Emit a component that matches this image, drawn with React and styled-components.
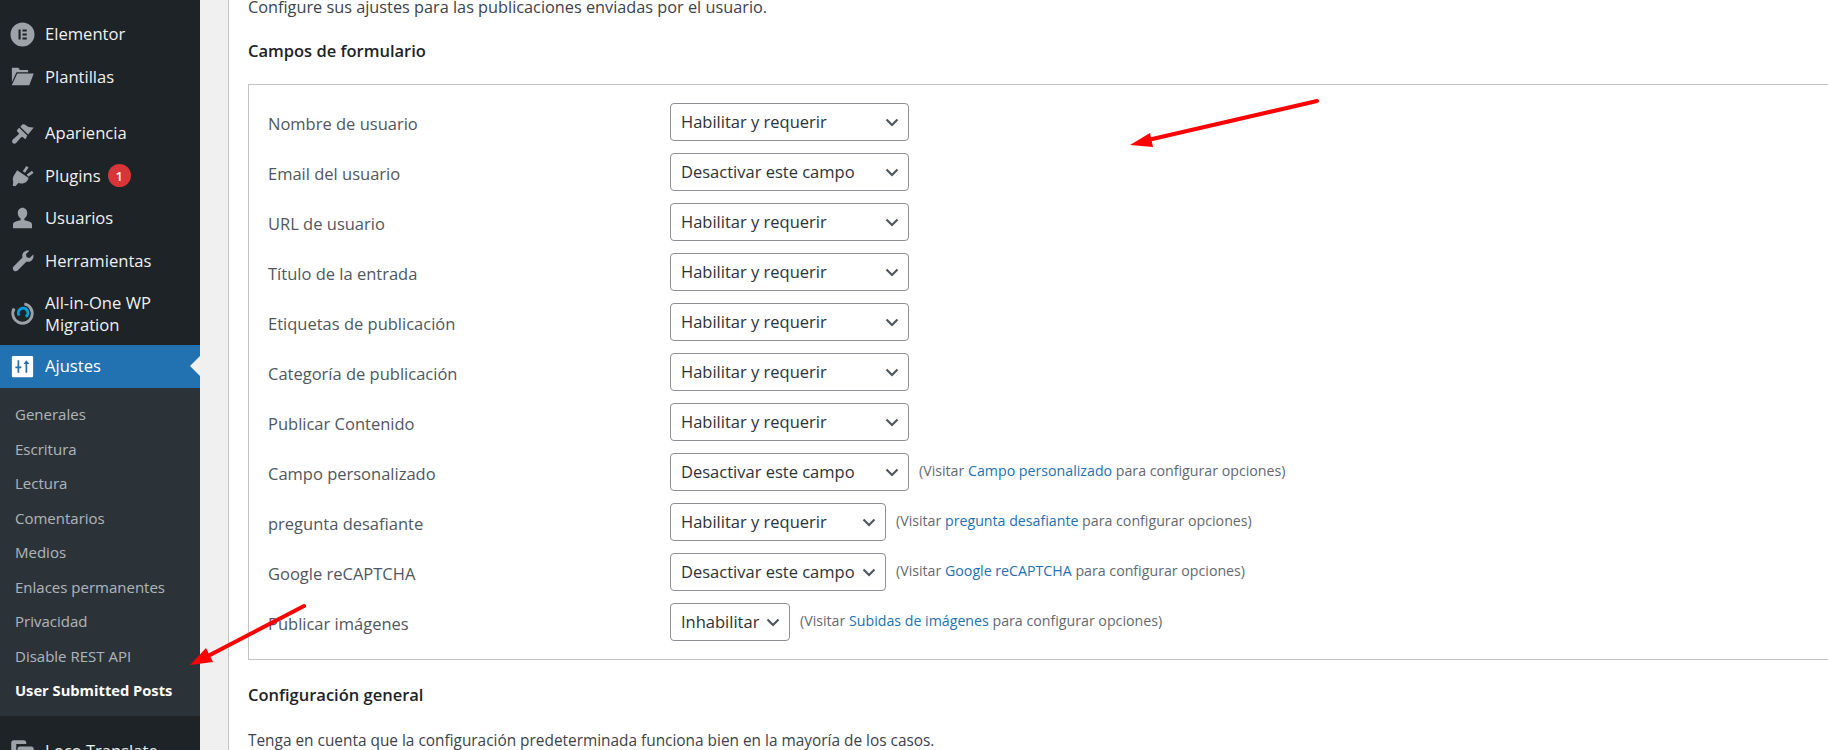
import React from 'react'
import styled, { createGlobalStyle, css } from 'styled-components'

const GlobalStyle = createGlobalStyle`
  html, body {
    margin: 0;
    height: 100%;
    overflow: hidden;
    background: #f0f0f1;
    font-family: 'Open Sans', 'Noto Sans', sans-serif;
  }
`

const chevron = `url("data:image/svg+xml;utf8,<svg xmlns='http://www.w3.org/2000/svg' width='16' height='16' viewBox='0 0 16 16'><path d='M2.500 5.500l5.500 5.500 5.500-5.500' fill='none' stroke='%2350575e' stroke-width='2.200'/></svg>")`

const Page = styled.div`
  display: flex;
  height: 750px;
  overflow: hidden;
  position: relative;
`
const Sidebar = styled.nav`
  width: 200px;
  flex: none;
  background: #1d2327;
  padding-top: 13px;
`
const MenuItem = styled.div`
  position: relative;
  display: flex;
  align-items: center;
  gap: 10px;
  height: ${p => (p.$tall ? 63 : 42.5)}px;
  padding-left: 10px;
  color: #f0f0f1;
  font-size: 16.6px;
  line-height: 22px;
  box-sizing: border-box;
  ${p => p.$active && css`
    background: #2271b1;
    color: #fff;
    &::after {
      content: '';
      position: absolute;
      right: 0;
      top: 11px;
      border: 10px solid transparent;
      border-left: 0;
      border-right-color: #f0f0f1;
    }
  `}
`
const IconSlot = styled.span`
  width: 25px;
  height: 25px;
  flex: none;
  color: ${p => (p.$active ? '#fff' : '#9ca2a7')};
  svg { display: block; width: 25px; height: 25px; }
`
const Badge = styled.span`
  width: 23px;
  height: 23px;
  border-radius: 50%;
  background: #d63638;
  color: #fff;
  font-size: 13px;
  font-weight: 600;
  display: flex;
  align-items: center;
  justify-content: center;
  margin-left: -3px;
`
const Spacer = styled.div`
  height: 14px;
`
const Submenu = styled.div`
  background: #2c3338;
  padding: 9.500px 0 8px;
  margin-bottom: 14px;
`
const SubItem = styled.div`
  height: 34.550px;
  line-height: 34.550px;
  padding-left: 15px;
  font-size: ${p => (p.$current ? 14.7 : 15)}px;
  color: ${p => (p.$current ? '#fff' : 'rgba(240, 246, 252, 0.68)')};
  font-weight: ${p => (p.$current ? 700 : 400)};
  white-space: nowrap;
`
const Gutter = styled.div`
  width: 28px;
  flex: none;
  border-right: 1px solid #c3c4c7;
`
const Content = styled.main`
  flex: 1;
  min-width: 0;
  background: #fff;
  padding-left: 19px;
  color: #3c434a;
  font-size: 16.500px;
  line-height: 22px;
`
const Intro = styled.p`
  margin: -4px 0 0;
  font-size: 16.300px;
`
const Heading = styled.h2`
  margin: ${p => p.$top}px 0 ${p => p.$bottom}px;
  font-size: 16.500px;
  line-height: 22px;
  font-weight: 600;
  color: #1d2327;
`
const FieldBox = styled.div`
  border: 1px solid #c3c4c7;
  margin-right: -10px;
  padding: 18px 19px;
  display: flex;
  flex-direction: column;
  gap: 12px;
`
const Row = styled.div`
  display: flex;
  align-items: center;
  height: 38px;
`
const FieldLabel = styled.label`
  width: 402px;
  flex: none;
  color: #50575e;
  padding-top: 3px;
`
const Select = styled.select`
  appearance: none;
  width: ${p => p.$width}px;
  height: 38px;
  box-sizing: border-box;
  border: 1px solid #8c8f94;
  border-radius: 4px;
  padding: 0 24px 0 10px;
  background: #fff ${chevron} no-repeat right 8px center;
  color: #2c3338;
  font: inherit;
`
const Note = styled.span`
  margin-left: 10px;
  font-size: 14.200px;
  color: #646970;
  padding-bottom: 2px;
  white-space: nowrap;
`
const NoteLink = styled.a`
  color: #2271b1;
  text-decoration: none;
`
const Advice = styled.p`
  margin: 0;
  font-size: 15.400px;
`
const Overlay = styled.svg`
  position: absolute;
  left: 0;
  top: 0;
  pointer-events: none;
`

const ElementorIcon = () => (
  <svg viewBox="0 0 20 20"><path fill="currentColor" fillRule="evenodd" d="M10 .4a9.600 9.600 0 1 0 0 19.200A9.600 9.600 0 0 0 10 .4zM6.800 6h1.700v8H6.800zm3.200 0h3.400v1.600H10zm0 3.200h3.400v1.600H10zm0 3.200h3.400V14H10z" /></svg>
)
const FolderIcon = () => (
  <svg viewBox="0 0 20 20"><path fill="currentColor" d="M1.500 3h5.200l1.200 1.800h6.600v1.700H5.200L1.500 14.500zM5.800 7.500h13.200L15.400 17H1.400z" /></svg>
)
const BrushIcon = () => (
  <svg viewBox="0 0 20 20"><path fill="currentColor" d="M14.500 10.800L8.200 4.500 9.700 3c.6-.6 2-.4 3 .4 1.300 1 2.300 1.900 6.300 1.700zM13.700 11.600L7.400 5.300 5.800 6.900c-.4.4-.4 1 0 1.400l1 1c.4.400.4 1 0 1.400-.9.900-3.200 2.700-4.400 3.900-.9.900-1 2.200-.2 3 .8.800 2 .6 2.900-.3 1.200-1.200 3-3.400 3.900-4.300.4-.4 1-.4 1.400 0l1 1c.4.400 1 .4 1.400 0z" /></svg>
)
const PlugIcon = () => (
  <svg viewBox="0 0 20 20"><path fill="currentColor" d="M13.100 2.300l1.800 1.200-2.900 4.300-1.800-1.200zM17.600 6.200l1.200 1.800-4.200 3-1.200-1.800zM5.700 5.800l9.200 6.200-.5 1.200c-.7 1.600-2.500 3.100-4.400 3.200-1.100.1-2.100-.2-3-.7L4.200 18.500 2.200 18.200l.4-3.200c-.6-1.500-.4-3.300.3-4.700z" /></svg>
)
const UserIcon = () => (
  <svg viewBox="0 0 20 20"><path fill="currentColor" d="M10 1.300c2.200 0 3.800 1.900 3.800 4.300 0 1.900-1 3.700-2.300 4.400v1.300c3.200.6 6.100 1.500 6.100 3.200v3.200H2.400v-3.200c0-1.700 2.900-2.600 6.100-3.200V10c-1.300-.7-2.300-2.500-2.300-4.400C6.200 3.200 7.800 1.300 10 1.300z" /></svg>
)
const WrenchIcon = () => (
  <svg viewBox="0 0 20 20"><path fill="currentColor" d="M18.600 5.200c.5 1.600.1 3.300-1.100 4.500-1.200 1.200-2.800 1.500-4.300 1.100L6.100 18c-.8.800-2.300.8-3.200-.1-.9-.9-.9-2.300-.1-3.200L10 7.500c-.5-1.500-.1-3.200 1.100-4.300 1.200-1.200 2.900-1.500 4.400-1.100l-2.800 2.800.6 2.400 2.400.6z" /></svg>
)
const MigrationIcon = () => (
  <svg viewBox="0 0 20 20">
    <path fill="none" stroke="#9ca2a7" strokeWidth="2.300" d="M11.500 2.300a7.800 7.800 0 1 1-8.200 3.700" />
    <path fill="none" stroke="#00a0e0" strokeWidth="2.300" d="M7.300 11.600a3.800 3.800 0 1 1 5.400 1" />
  </svg>
)
const SettingsIcon = () => (
  <svg viewBox="0 0 20 20"><path fill="currentColor" fillRule="evenodd" d="M2.500 1.500h15a1 1 0 0 1 1 1v15a1 1 0 0 1-1 1h-15a1 1 0 0 1-1-1v-15a1 1 0 0 1 1-1zM6 5v5H4.300v1.300H6V15h1.400v-3.700h1.700V10H7.400V5zM13 5L10.800 8h1.600v7h1.400V8h1.800z" /></svg>
)
const LocoIcon = () => (
  <svg viewBox="0 0 20 20"><path fill="currentColor" d="M3 1h8a2 2 0 0 1 2 2v1H5v9H3a2 2 0 0 1-2-2V3a2 2 0 0 1 2-2zM8 6h9a2 2 0 0 1 2 2v8a2 2 0 0 1-2 2H8a2 2 0 0 1-2-2V8a2 2 0 0 1 2-2z" /></svg>
)

const subItems = ['Generales', 'Escritura', 'Lectura', 'Comentarios', 'Medios', 'Enlaces permanentes', 'Privacidad', 'Disable REST API']

const ON = 'Habilitar y requerir'
const OFF = 'Desactivar este campo'
const fields = [
  { label: 'Nombre de usuario', value: ON, width: 239 },
  { label: 'Email del usuario', value: OFF, width: 239 },
  { label: 'URL de usuario', value: ON, width: 239 },
  { label: 'Título de la entrada', value: ON, width: 239 },
  { label: 'Etiquetas de publicación', value: ON, width: 239 },
  { label: 'Categoría de publicación', value: ON, width: 239 },
  { label: 'Publicar Contenido', value: ON, width: 239 },
  { label: 'Campo personalizado', value: OFF, width: 239, link: 'Campo personalizado' },
  { label: 'pregunta desafiante', value: ON, width: 216, link: 'pregunta desafiante' },
  { label: 'Google reCAPTCHA', value: OFF, width: 216, link: 'Google reCAPTCHA' },
  { label: 'Publicar imágenes', value: 'Inhabilitar', width: 120, link: 'Subidas de imágenes' },
]

const App = () => (
  <Page>
    <GlobalStyle />
    <Sidebar>
      <MenuItem><IconSlot><ElementorIcon /></IconSlot>Elementor</MenuItem>
      <MenuItem><IconSlot><FolderIcon /></IconSlot>Plantillas</MenuItem>
      <Spacer />
      <MenuItem><IconSlot><BrushIcon /></IconSlot>Apariencia</MenuItem>
      <MenuItem><IconSlot><PlugIcon /></IconSlot>Plugins<Badge>1</Badge></MenuItem>
      <MenuItem><IconSlot><UserIcon /></IconSlot>Usuarios</MenuItem>
      <MenuItem><IconSlot><WrenchIcon /></IconSlot>Herramientas</MenuItem>
      <MenuItem $tall><IconSlot><MigrationIcon /></IconSlot>All-in-One WP<br />Migration</MenuItem>
      <MenuItem $active><IconSlot $active><SettingsIcon /></IconSlot>Ajustes</MenuItem>
      <Submenu>
        {subItems.map(item => <SubItem key={item}>{item}</SubItem>)}
        <SubItem $current>User Submitted Posts</SubItem>
      </Submenu>
      <MenuItem><IconSlot><LocoIcon /></IconSlot>Loco Translate</MenuItem>
    </Sidebar>
    <Gutter />
    <Content>
      <Intro>Configure sus ajustes para las publicaciones enviadas por el usuario.</Intro>
      <Heading $top={22} $bottom={22}>Campos de formulario</Heading>
      <FieldBox>
        {fields.map(f => (
          <Row key={f.label}>
            <FieldLabel>{f.label}</FieldLabel>
            <Select $width={f.width} defaultValue={f.value}>
              <option>{ON}</option>
              <option>{OFF}</option>
              <option>Inhabilitar</option>
            </Select>
            {f.link && (
              <Note>(Visitar <NoteLink href="#">{f.link}</NoteLink> para configurar opciones)</Note>
            )}
          </Row>
        ))}
      </FieldBox>
      <Heading $top={24} $bottom={24}>Configuración general</Heading>
      <Advice>Tenga en cuenta que la configuración predeterminada funciona bien en la mayoría de los casos.</Advice>
    </Content>
    <Overlay width="1828" height="750" viewBox="0 0 1828 750">
      <path d="M1317 101L1148 140" stroke="#f00" strokeWidth="4" strokeLinecap="round" />
      <path d="M1130 145L1150 133L1153 147z" fill="#f00" />
      <path d="M304 606L208 656" stroke="#f00" strokeWidth="4" strokeLinecap="round" />
      <path d="M190 665L206 648L213 662z" fill="#f00" />
    </Overlay>
  </Page>
)

export default App
